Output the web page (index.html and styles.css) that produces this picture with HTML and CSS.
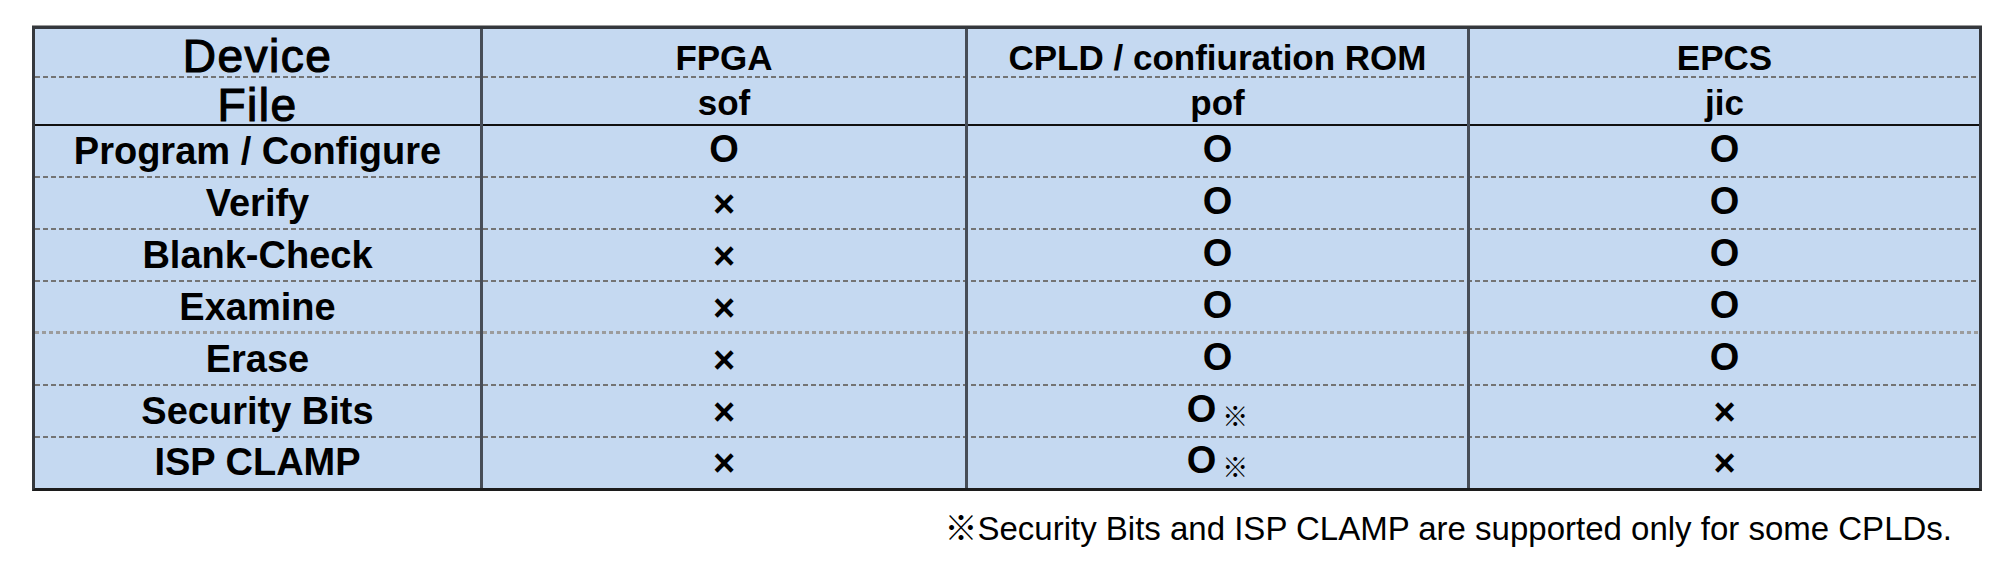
FILE: index.html
```html
<!DOCTYPE html>
<html lang="en">
<head>
<meta charset="utf-8">
<title>Device operations</title>
<link rel="stylesheet" href="styles.css">
</head>
<body>
<div class="page">
  <div class="table">
    <div class="row head1 dash">
      <div class="cell big">Device</div>
      <div class="cell title">FPGA</div>
      <div class="cell title">CPLD / confiuration ROM</div>
      <div class="cell title">EPCS</div>
    </div>
    <div class="row head2 solid">
      <div class="cell big file">File</div>
      <div class="cell title sub">sof</div>
      <div class="cell title sub">pof</div>
      <div class="cell title sub">jic</div>
    </div>
    <div class="row dash">
      <div class="cell label">Program / Configure</div>
      <div class="cell mark">O</div>
      <div class="cell mark">O</div>
      <div class="cell mark">O</div>
    </div>
    <div class="row dash">
      <div class="cell label">Verify</div>
      <div class="cell cross">×</div>
      <div class="cell mark">O</div>
      <div class="cell mark">O</div>
    </div>
    <div class="row dash">
      <div class="cell label">Blank-Check</div>
      <div class="cell cross">×</div>
      <div class="cell mark">O</div>
      <div class="cell mark">O</div>
    </div>
    <div class="row dot">
      <div class="cell label">Examine</div>
      <div class="cell cross">×</div>
      <div class="cell mark">O</div>
      <div class="cell mark">O</div>
    </div>
    <div class="row dash">
      <div class="cell label">Erase</div>
      <div class="cell cross">×</div>
      <div class="cell mark">O</div>
      <div class="cell mark">O</div>
    </div>
    <div class="row dash">
      <div class="cell label">Security Bits</div>
      <div class="cell cross">×</div>
      <div class="cell mark">O<span class="note">※</span></div>
      <div class="cell cross">×</div>
    </div>
    <div class="row last">
      <div class="cell label">ISP CLAMP</div>
      <div class="cell cross">×</div>
      <div class="cell mark">O<span class="note">※</span></div>
      <div class="cell cross">×</div>
    </div>
  </div>
  <p class="footnote">※Security Bits and ISP CLAMP are supported only for some CPLDs.</p>
</div>
</body>
</html>
```

FILE: styles.css
```css
* {
  box-sizing: border-box;
}

html, body {
  margin: 0;
  padding: 0;
  background: #ffffff;
}

body {
  font-family: "Liberation Sans", Arial, "Noto Sans CJK JP", sans-serif;
  color: #000;
}

.page {
  width: 2011px;
  height: 566px;
  padding: 26px 0 0 32px;
}

.table {
  width: 1950px;
  border: 3px solid #35383d;
  border-bottom-color: #1c1c1c;
  background: #c5d9f1;
  box-shadow: 0 -1px 0 #9a9a9a;
}

.row {
  display: grid;
  grid-template-columns: 445px 485px 502px 512px;
  height: 52px;
  background-repeat: no-repeat;
  background-position: left bottom;
  background-size: 100% 2px;
}

.head1 {
  height: 49px;
}

.head2 {
  height: 48px;
}

.last {
  height: 50px;
}

.dash {
  background-image: repeating-linear-gradient(90deg, #747474 0 5px, transparent 5px 8px);
}

.dot {
  background-size: 100% 3px;
  background-image: repeating-linear-gradient(90deg, #9c9c9c 0 4px, transparent 4px 7px);
}

.solid {
  border-bottom: 2px solid #111;
}

.cell {
  display: flex;
  align-items: center;
  justify-content: center;
  white-space: nowrap;
}

.cell + .cell {
  border-left: 3px solid #474d57;
}

.big {
  font-size: 46px;
  font-weight: 400;
  letter-spacing: 1.5px;
  -webkit-text-stroke: 1.2px #000;
  padding-bottom: 18px;
}

.file {
  padding-bottom: 10px;
}

.title {
  font-size: 35px;
  font-weight: 700;
  padding-bottom: 14px;
}

.sub {
  padding-bottom: 14px;
}

.label {
  font-size: 38px;
  font-weight: 700;
  padding-bottom: 2px;
}

.mark {
  font-size: 38px;
  font-weight: 700;
  padding-bottom: 5px;
}

.cross {
  font-size: 38px;
  font-weight: 700;
}

.note {
  font-family: "Noto Sans CJK JP", sans-serif;
  font-size: 26px;
  font-weight: 400;
  margin-left: 6px;
  position: relative;
  top: 5px;
}

.footnote {
  margin: 18px 0 0 0;
  width: 1920px;
  text-align: right;
  font-size: 33px;
  line-height: 40px;
  font-weight: 400;
}
```
